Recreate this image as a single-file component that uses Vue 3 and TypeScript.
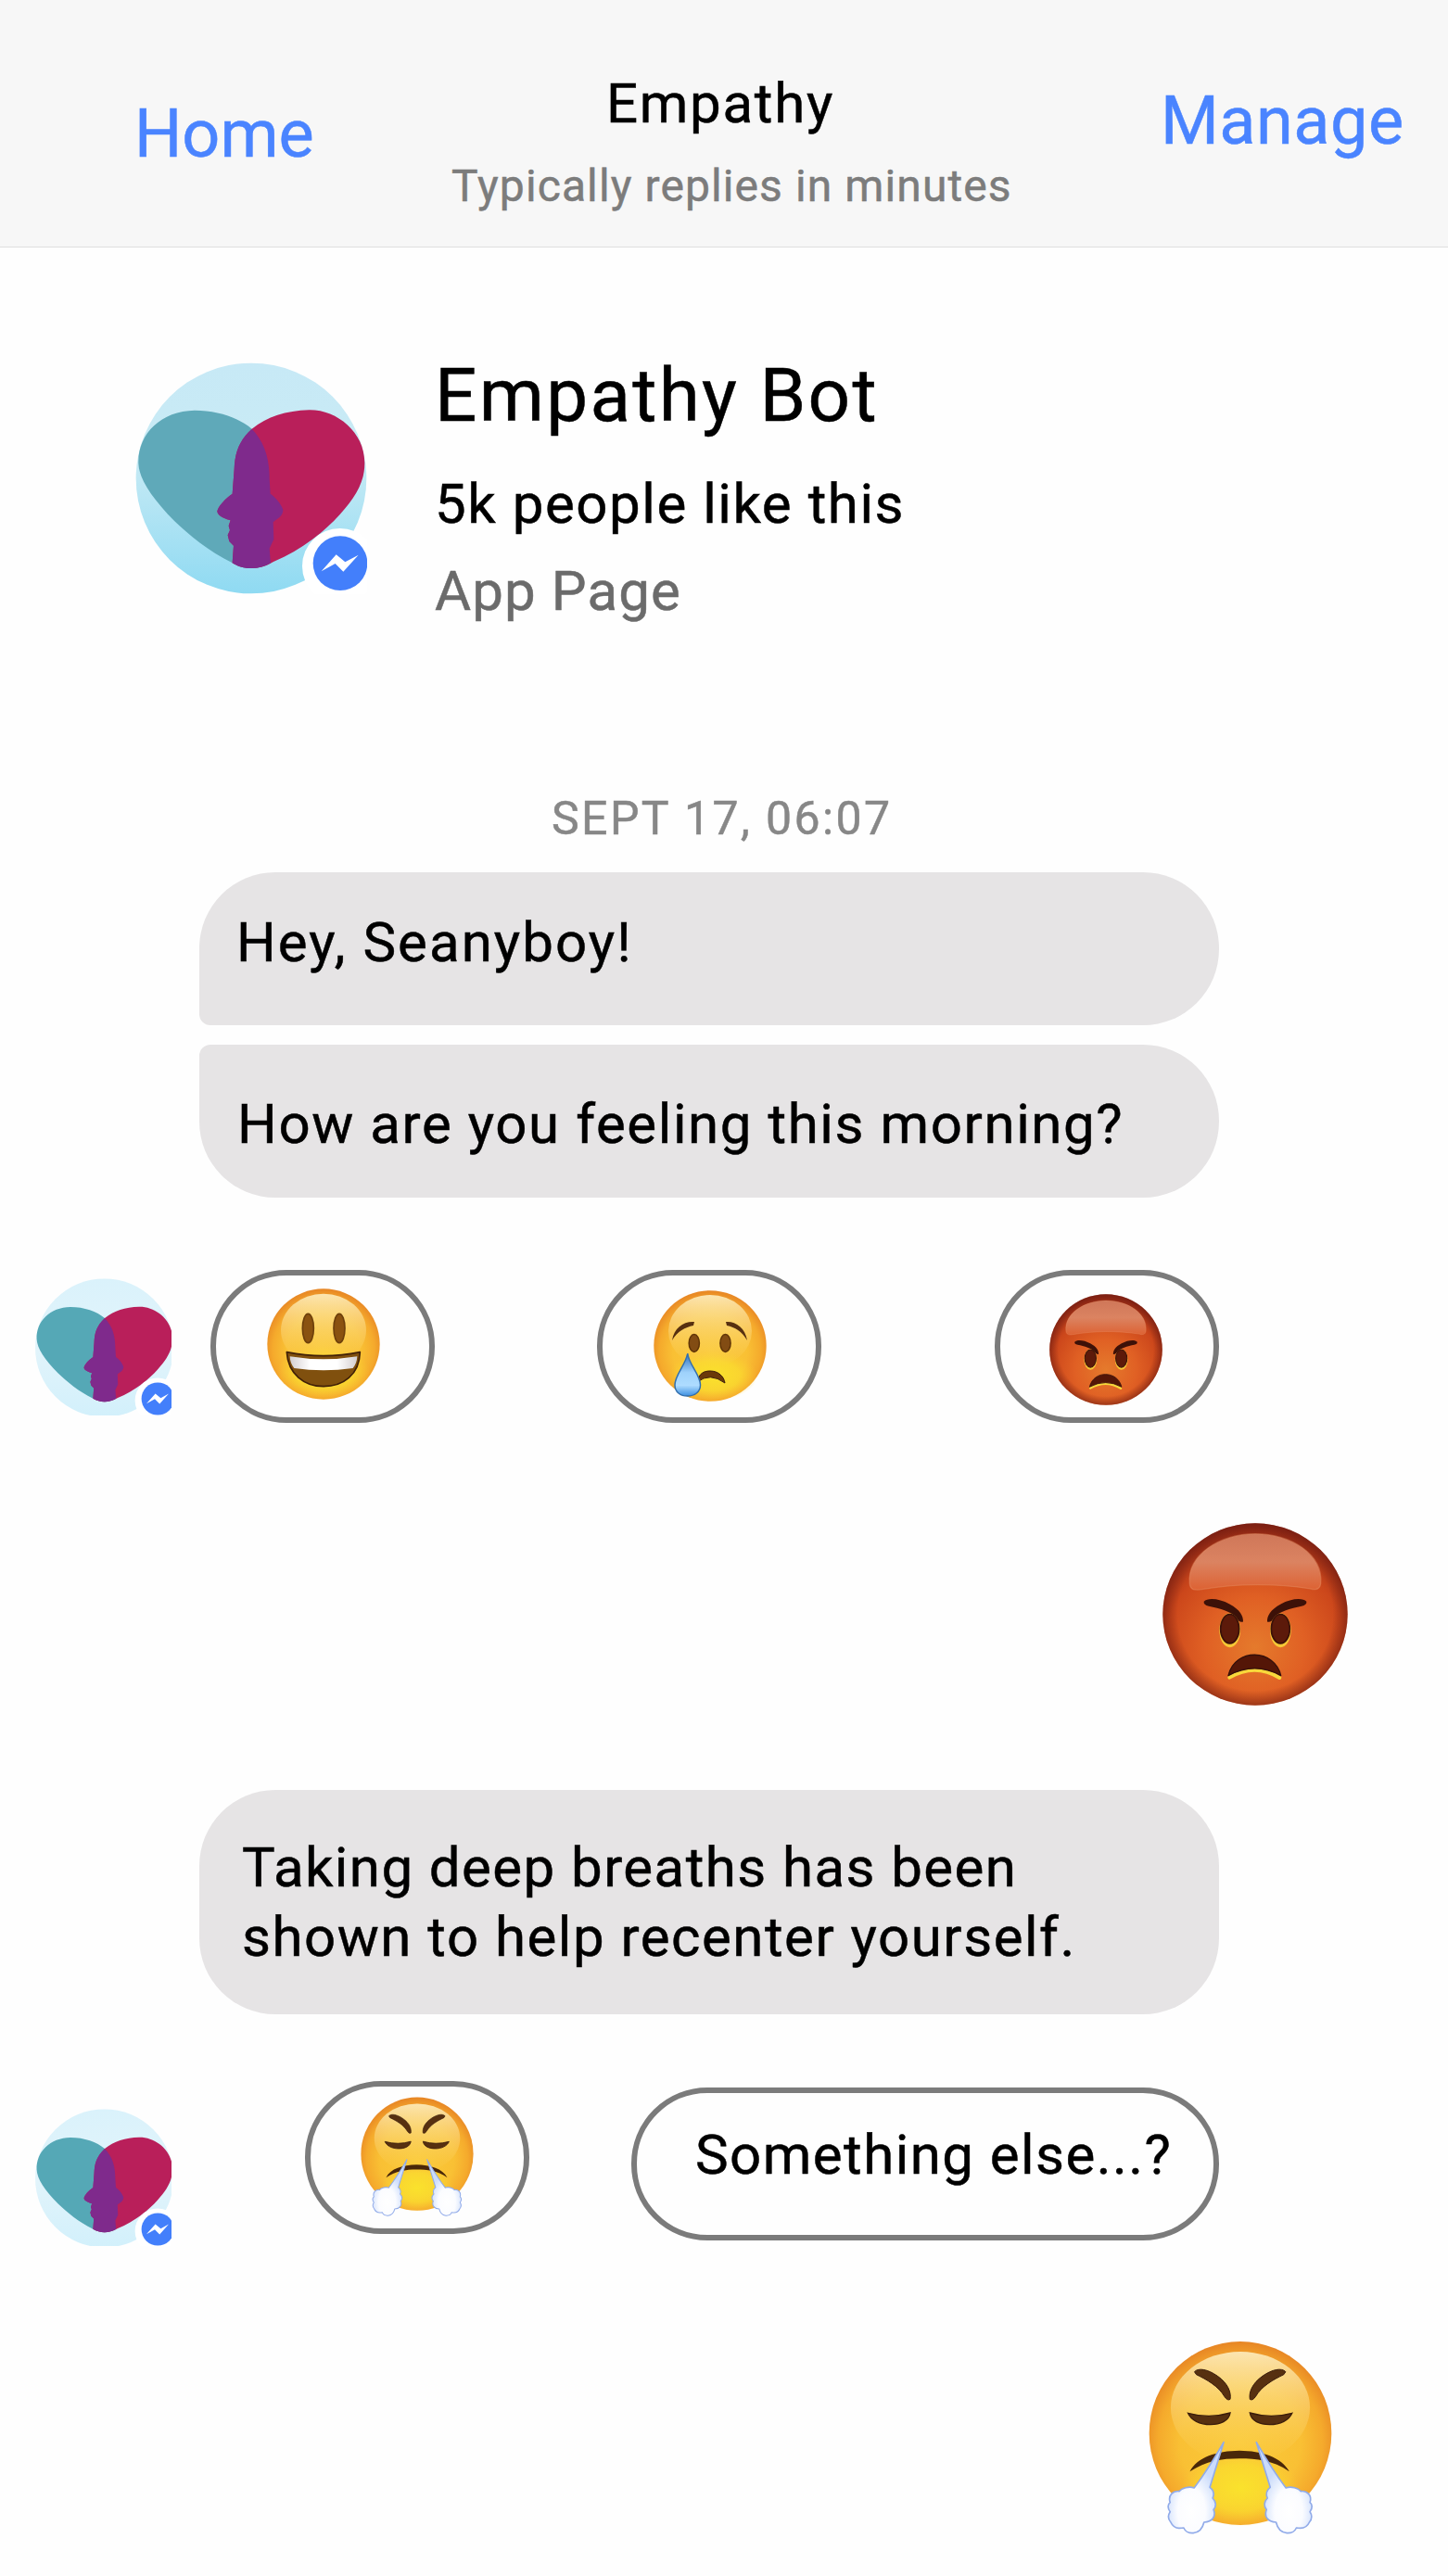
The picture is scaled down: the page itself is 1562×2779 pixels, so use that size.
<script setup lang="ts">
import { defineComponent, h } from 'vue'

type Node = [string, Record<string, string | number>]

const draw = (nodes: Node[]) => nodes.map(([tag, attrs]) => h(tag, attrs))

const heads = {
  teal: 'M88 420C85 325 160 250 270 248C345 248 412 272 455 308C495 350 512 400 512 470L515 518C532 530 550 550 556 570C556 592 535 600 524 610L526 665L512 695L516 742C480 764 430 766 392 742C315 705 250 650 205 607C130 530 90 470 88 420Z',
  red: 'M820 420C822 320 730 245 640 247C565 250 505 268 455 308C410 350 400 390 398 440L392 518C370 532 345 560 343 575C345 592 375 600 386 604L380 622L384 636L377 652L382 672L396 686L392 742C430 766 485 764 525 738C620 698 690 640 740 585C790 530 820 480 820 420Z',
  both: 'M455 308C495 350 512 400 512 470L515 518C532 530 550 550 556 570C556 592 535 600 524 610L526 665L512 695L516 742C480 764 430 766 392 742L396 686L382 672L377 652L384 636L380 622L386 604C375 600 345 592 343 575C345 560 370 532 392 518L398 440C400 390 410 350 455 308Z',
}

const Avatar = defineComponent({
  props: { small: Boolean },
  setup: (props) => () =>
    h('svg', { viewBox: props.small ? '80 93 735 740' : '78 93 750 750' }, draw([
      ['circle', { cx: 453, cy: 468, r: 373, fill: props.small ? 'url(#skyPale)' : 'url(#sky)' }],
      ['path', { d: heads.teal, fill: props.small ? '#55a8b6' : '#5fa9b9' }],
      ['path', { d: heads.red, fill: '#b91f5a' }],
      ['path', { d: heads.both, fill: '#7f2a8c' }],
      ['circle', { cx: 740, cy: 752, r: 122, fill: '#fff' }],
      ['circle', { cx: 741, cy: 743, r: 88, fill: '#437ffb' }],
      ['path', { d: 'M680 769L728 715L757 739L800 716L751 770L725 744Z', fill: '#fff' }],
    ])),
})

const brown = '#573010'
const dark = '#3a1c0b'

const Smile = () =>
  h('svg', { viewBox: '804 120 366 360', preserveAspectRatio: 'none' }, draw([
    ['ellipse', { cx: 987, cy: 300, rx: 182, ry: 179, fill: 'url(#yellowRim)' }],
    ['ellipse', { cx: 987, cy: 390, rx: 150, ry: 85, fill: 'url(#chin)' }],
    ['ellipse', { cx: 987, cy: 255, rx: 138, ry: 118, fill: 'url(#gloss)' }],
    ['ellipse', { cx: 937, cy: 249, rx: 18, ry: 47, fill: '#8a5210', stroke: '#6e400b', 'stroke-width': 5 }],
    ['ellipse', { cx: 1038, cy: 249, rx: 18, ry: 47, fill: '#8a5210', stroke: '#6e400b', 'stroke-width': 5 }],
    ['path', { d: 'M868 326Q987 350 1105 326C1103 400 1050 437 987 437C925 437 872 397 868 326Z', fill: '#80500e', stroke: '#402007', 'stroke-width': 5, 'stroke-linejoin': 'round' }],
    ['path', { d: 'M878 340Q987 358 1096 340Q1095 363 1082 378Q987 392 892 378Q879 363 878 340Z', fill: 'url(#teeth)' }],
  ]))

const Sad = () =>
  h('svg', { viewBox: '0 0 122 120', preserveAspectRatio: 'none' }, draw([
    ['ellipse', { cx: 61, cy: 60, rx: 60.7, ry: 59.8, fill: 'url(#yellowRim)' }],
    ['ellipse', { cx: 64, cy: 92, rx: 48, ry: 27, fill: 'url(#chin)' }],
    ['ellipse', { cx: 61, cy: 44, rx: 45, ry: 39, fill: 'url(#gloss)' }],
    ['path', { d: 'M20 54C22 40 33 33 44 34L43 38C34 40 26 44 20 54Z', fill: brown }],
    ['path', { d: 'M101 54C99 40 88 33 78 34L79 38C88 40 95 44 101 54Z', fill: brown }],
    ['ellipse', { cx: 43.8, cy: 57, rx: 5.6, ry: 9.5, fill: '#824c13', stroke: '#603507', 'stroke-width': 1.5 }],
    ['ellipse', { cx: 77.5, cy: 57, rx: 5.6, ry: 9.5, fill: '#824c13', stroke: '#603507', 'stroke-width': 1.5 }],
    ['path', { d: 'M47 99C49 89 55 87 61 87C70 87 76 93 77 100Q61 88 47 99Z', fill: '#6b3909', stroke: dark, 'stroke-width': 1 }],
    ['path', { d: 'M36.7 68C38 80 50.5 91 50.5 102C50.5 110 44 114 36.7 114C29 114 23 110 23 102C23 91 35 80 36.7 68Z', fill: 'url(#tear)', stroke: '#326fae', 'stroke-width': 1.5 }],
  ]))

const Angry = () =>
  h('svg', { viewBox: '103 69 600 590', preserveAspectRatio: 'none' }, draw([
    ['ellipse', { cx: 403, cy: 364, rx: 299, ry: 294, fill: 'url(#redRim)' }],
    ['ellipse', { cx: 403, cy: 364, rx: 299, ry: 294, fill: 'url(#redShade)' }],
    ['path', { d: 'M191 265C182 170 290 105 403 104C520 105 624 170 615 265C612 285 598 286 580 281C460 263 345 264 225 284C205 287 193 284 191 265Z', fill: 'url(#redGloss)', stroke: '#e9956b', 'stroke-opacity': 0.4, 'stroke-width': 4 }],
    ['ellipse', { cx: 321, cy: 416, rx: 34, ry: 55, fill: '#f6c836' }],
    ['ellipse', { cx: 485, cy: 416, rx: 34, ry: 55, fill: '#f6c836' }],
    ['ellipse', { cx: 321, cy: 411, rx: 30, ry: 47, fill: '#5c1a0a', stroke: '#3b1108', 'stroke-width': 5 }],
    ['ellipse', { cx: 485, cy: 411, rx: 30, ry: 47, fill: '#5c1a0a', stroke: '#3b1108', 'stroke-width': 5 }],
    ['path', { d: 'M237 323C249 309 288 313 320 331C354 349 365 370 364 388Q351 392 343 375C330 357 287 345 253 338Q235 334 237 323Z', fill: '#3d1108' }],
    ['path', { d: 'M569 323C557 309 518 313 486 331C452 349 441 370 442 388Q455 392 463 375C476 357 519 345 553 338Q571 334 569 323Z', fill: '#3d1108' }],
    ['path', { d: 'M320 568Q402 520 482 569', fill: 'none', stroke: '#f8d83b', 'stroke-width': 12, 'stroke-linecap': 'round' }],
    ['path', { d: 'M316 562C328 513 367 495 401 495C440 495 477 520 486 562Q402 516 316 562Z', fill: '#541607', stroke: '#35100a', 'stroke-width': 4, 'stroke-linejoin': 'round' }],
  ]))

const puff =
  'M332 402L287 548C303 560 300 574 296 583C307 594 309 609 299 620C308 642 295 660 268 661C263 683 252 694 233 696C218 697 206 689 202 679C183 683 167 677 160 661C149 648 151 637 158 627C148 615 151 602 158 597C150 574 168 558 188 561C195 550 220 544 236 550C269 507 310 440 332 402Z'

const steam: Node = ['path', { d: puff, fill: 'url(#steam)', stroke: '#91abe9', 'stroke-width': 5, 'stroke-linejoin': 'round' }]

const Huff = () =>
  h('svg', { viewBox: '88 73 596 627', preserveAspectRatio: 'none' }, [
    ...draw([
      ['ellipse', { cx: 386, cy: 373, rx: 296, ry: 297, fill: 'url(#yellowRim)' }],
      ['ellipse', { cx: 386, cy: 550, rx: 190, ry: 125, fill: 'url(#chin)' }],
      ['ellipse', { cx: 386, cy: 290, rx: 226, ry: 181, fill: 'url(#gloss)' }],
      ['path', { d: 'M237 174C250 160 281 166 312 188C345 211 357 240 353 263Q345 269 335 255C315 220 276 199 243 183Z', fill: brown, stroke: dark, 'stroke-width': 3 }],
      ['path', { d: 'M533 174C520 160 489 166 458 188C425 211 413 240 417 263Q425 269 435 255C455 220 494 199 527 183Z', fill: brown, stroke: dark, 'stroke-width': 3 }],
      ['path', { d: 'M216 308Q286 327 353 307C349 334 320 345 289 345C254 345 226 331 216 308Z', fill: brown, stroke: dark, 'stroke-width': 4 }],
      ['path', { d: 'M554 308Q484 327 417 307C421 334 450 345 481 345C516 345 544 331 554 308Z', fill: brown, stroke: dark, 'stroke-width': 4 }],
      ['path', { d: 'M222 497C245 450 310 430 383 429C455 430 520 450 545 497C490 460 440 455 383 455C325 455 275 463 222 497Z', fill: '#492709' }],
    ]),
    h('g', draw([steam])),
    h('g', { transform: 'translate(770 0) scale(-1 1)' }, draw([steam])),
  ])
</script>

<template>
  <div class="app">
    <svg class="defs" width="0" height="0" aria-hidden="true">
      <defs>
        <linearGradient id="sky" x1="0" y1="0" x2="0" y2="1">
          <stop offset="0" stop-color="#c7e9f6" />
          <stop offset=".4" stop-color="#c9ebf5" />
          <stop offset="1" stop-color="#8fdaf2" />
        </linearGradient>
        <linearGradient id="skyPale" x1="0" y1="0" x2="0" y2="1">
          <stop offset="0" stop-color="#daf2fb" />
          <stop offset=".5" stop-color="#e2f4fb" />
          <stop offset="1" stop-color="#d2f0fb" />
        </linearGradient>
        <radialGradient id="yellowRim" cx=".5" cy=".55" r=".55">
          <stop offset="0" stop-color="#fbcb38" />
          <stop offset=".6" stop-color="#f9c034" />
          <stop offset=".82" stop-color="#f5aa2c" />
          <stop offset="1" stop-color="#e78524" />
        </radialGradient>
        <radialGradient id="chin">
          <stop offset="0" stop-color="#fae22c" />
          <stop offset=".6" stop-color="#fadc2e" stop-opacity=".75" />
          <stop offset="1" stop-color="#fad02e" stop-opacity="0" />
        </radialGradient>
        <linearGradient id="gloss" x1="0" y1="0" x2="0" y2="1">
          <stop offset="0" stop-color="#fdeec0" stop-opacity=".9" />
          <stop offset=".6" stop-color="#fbd674" stop-opacity=".45" />
          <stop offset="1" stop-color="#fbd056" stop-opacity="0" />
        </linearGradient>
        <linearGradient id="teeth" x1="0" y1="0" x2="1" y2="0">
          <stop offset="0" stop-color="#d4cfd0" />
          <stop offset=".3" stop-color="#fff" />
          <stop offset=".7" stop-color="#fff" />
          <stop offset="1" stop-color="#d4cfd0" />
        </linearGradient>
        <linearGradient id="tear" x1="0" y1="0" x2="0" y2="1">
          <stop offset="0" stop-color="#2c6fc0" />
          <stop offset=".45" stop-color="#9fd2fb" />
          <stop offset=".75" stop-color="#aedcff" />
          <stop offset="1" stop-color="#3d8fe0" />
        </linearGradient>
        <radialGradient id="redRim" cx=".5" cy=".68" r=".68">
          <stop offset="0" stop-color="#e57a2c" />
          <stop offset=".4" stop-color="#e06024" />
          <stop offset=".72" stop-color="#cc471b" />
          <stop offset="1" stop-color="#8c2414" />
        </radialGradient>
        <radialGradient id="redShade">
          <stop offset=".84" stop-color="#6b1a10" stop-opacity="0" />
          <stop offset="1" stop-color="#6b1a10" stop-opacity=".55" />
        </radialGradient>
        <linearGradient id="redGloss" x1="0" y1="0" x2="0" y2="1">
          <stop offset="0" stop-color="#cf7759" />
          <stop offset=".5" stop-color="#db8361" />
          <stop offset="1" stop-color="#dd6233" />
        </linearGradient>
        <radialGradient id="steam" cx=".42" cy=".76" r=".5">
          <stop offset="0" stop-color="#fff" />
          <stop offset=".5" stop-color="#fbfcff" />
          <stop offset="1" stop-color="#cbdcfb" />
        </radialGradient>
      </defs>
    </svg>

    <header class="bar">
      <a class="link home">Home</a>
      <div class="heading">
        <div class="name">Empathy</div>
        <div class="status">Typically replies in minutes</div>
      </div>
      <a class="link manage">Manage</a>
    </header>

    <section class="profile">
      <Avatar class="portrait" />
      <div class="about">
        <h1>Empathy Bot</h1>
        <p class="likes">5k people like this</p>
        <p class="kind">App Page</p>
      </div>
    </section>

    <main class="chat">
      <time class="stamp">SEPT 17, 06:07</time>
      <div class="bubble first">Hey, Seanyboy!</div>
      <div class="bubble second">How are you feeling this morning?</div>

      <div class="row moods">
        <Avatar small class="mini" />
        <button class="pill smile"><Smile class="face" /></button>
        <button class="pill sad"><Sad class="face" /></button>
        <button class="pill angry"><Angry class="face" /></button>
      </div>

      <Angry class="sent sent-angry" />

      <div class="bubble advice">
        <div class="line-a">Taking deep breaths has been</div>
        <div class="line-b">shown to help recenter yourself.</div>
      </div>

      <div class="row next">
        <Avatar small class="mini" />
        <button class="pill huff"><Huff class="face" /></button>
        <button class="pill other">Something else...?</button>
      </div>

      <Huff class="sent sent-huff" />
    </main>
  </div>
</template>

<style>
body {
  margin: 0;
  background: #fefefe;
}
</style>

<style scoped>
.app {
  width: 1562px;
  height: 2779px;
  overflow: hidden;
  background: #fefefe;
  color: #000;
  font-family: Roboto, "Liberation Sans", sans-serif;
  font-size: 60px;
  line-height: 60px;
  white-space: nowrap;
  -webkit-text-stroke: 0.5px currentColor;
}
.defs {
  position: absolute;
}
svg {
  display: block;
  flex: none;
}
.bar {
  box-sizing: border-box;
  height: 267px;
  display: flex;
  align-items: flex-start;
  background: #f7f7f7;
  border-bottom: 1px solid #dfdfdf;
}
.link {
  color: #4a84ff;
  font-size: 72px;
  line-height: 72px;
}
.home {
  box-sizing: border-box;
  width: 487px;
  padding: 109px 0 0 145px;
  letter-spacing: 0;
}
.heading {
  width: 765px;
  padding-top: 82px;
}
.name {
  padding-left: 167px;
  letter-spacing: 1.7px;
}
.status {
  margin-top: 35px;
  color: #7c7c7c;
  font-size: 48px;
  line-height: 48px;
  letter-spacing: 1.1px;
}
.manage {
  padding-top: 95px;
  letter-spacing: 0.5px;
}
.profile {
  height: 591px;
  display: flex;
  align-items: flex-start;
}
.portrait {
  width: 250px;
  height: 250px;
  margin: 124px 73px 0 146px;
}
h1,
p {
  margin: 0;
  font-weight: 400;
}
h1 {
  margin-top: 120px;
  font-size: 80px;
  line-height: 80px;
  letter-spacing: 2.3px;
}
.likes {
  margin-top: 47px;
  letter-spacing: 1.55px;
}
.kind {
  margin-top: 34px;
  color: #6b6b6b;
  letter-spacing: 1.1px;
}
.chat {
  display: flex;
  flex-direction: column;
  align-items: flex-start;
}
.stamp {
  height: 83px;
  margin-left: 595px;
  color: #878787;
  font-size: 50px;
  line-height: 50px;
  letter-spacing: 2.4px;
}
.bubble {
  box-sizing: border-box;
  width: 1100px;
  height: 165px;
  margin-left: 215px;
  border-radius: 82px;
  background: #e6e4e5;
}
.first {
  padding: 46px 0 0 40px;
  border-bottom-left-radius: 12px;
  letter-spacing: 2.05px;
}
.second {
  margin-top: 21px;
  padding: 56px 0 0 41px;
  border-top-left-radius: 12px;
  letter-spacing: 1.58px;
}
.row {
  display: flex;
  align-items: flex-start;
}
.mini {
  width: 147px;
  height: 148px;
  margin-left: 38px;
}
.pill {
  box-sizing: border-box;
  width: 242px;
  height: 165px;
  padding: 0;
  display: flex;
  align-items: flex-start;
  border: 6px solid #7b7b7b;
  border-radius: 82px;
  background: transparent;
  color: inherit;
  font: inherit;
}
.face {
  width: 122px;
  height: 120px;
  margin-left: 55px;
}
.moods {
  margin-top: 78px;
}
.moods .mini {
  margin-top: 9px;
}
.smile {
  margin-left: 42px;
}
.smile .face {
  margin-top: 14px;
}
.sad {
  margin-left: 175px;
}
.sad .face {
  margin-top: 16px;
}
.angry {
  margin-left: 187px;
}
.angry .face {
  margin: 20px 0 0 53px;
}
.sent-angry {
  width: 200px;
  height: 197px;
  margin: 108px 0 0 1254px;
}
.advice {
  height: 242px;
  margin-top: 91px;
  padding: 46px 0 0 46px;
  line-height: 75px;
}
.line-a {
  letter-spacing: 1.43px;
}
.line-b {
  letter-spacing: 1.5px;
}
.next {
  margin-top: 72px;
}
.next .mini {
  margin-top: 30px;
}
.huff {
  margin-left: 144px;
}
.huff .face {
  height: 129px;
  margin: 11px 0 0 54px;
}
.other {
  width: 634px;
  margin: 7px 0 0 110px;
  padding: 37px 0 0 63px;
  letter-spacing: 1.45px;
}
.sent-huff {
  width: 198px;
  height: 209px;
  margin: 102px 0 0 1239px;
}
</style>
